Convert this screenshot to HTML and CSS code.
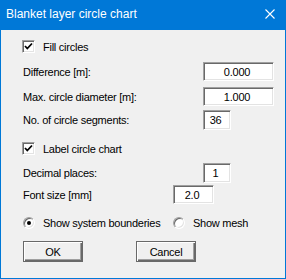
FILE: index.html
```html
<!DOCTYPE html>
<html lang="en">
<head>
  <meta charset="UTF-8" />
  <title>Blanket layer circle chart</title>
  <link rel="stylesheet" href="styles.css">
</head>
<body>
  <div class="dialog">
    <div class="titlebar">
      <span class="title">Blanket layer circle chart</span>
      <svg class="close" width="10" height="10" viewBox="0 0 10 10">
        <path d="M0.5 0.5 L9.5 9.5 M9.5 0.5 L0.5 9.5" stroke="#fff" stroke-width="1.1" fill="none" />
      </svg>
    </div>

    <div class="content">
      <label class="check row-fill">
        <span class="box">
          <svg width="9" height="9" viewBox="0 0 9 9"><polyline points="1,4 3.3,6.5 8,1.5" stroke="#000" stroke-width="1.8" fill="none" /></svg>
        </span>
        <span>Fill circles</span>
      </label>

      <div class="field row-diff">
        <span class="label">Difference [m]:</span>
        <input class="input wide" type="text" value="0.000">
      </div>

      <div class="field row-max">
        <span class="label">Max. circle diameter [m]:</span>
        <input class="input wide" type="text" value="1.000">
      </div>

      <div class="field row-seg">
        <span class="label">No. of circle segments:</span>
        <input class="input small" type="text" value="36">
      </div>

      <label class="check row-label">
        <span class="box">
          <svg width="9" height="9" viewBox="0 0 9 9"><polyline points="1,4 3.3,6.5 8,1.5" stroke="#000" stroke-width="1.8" fill="none" /></svg>
        </span>
        <span>Label circle chart</span>
      </label>

      <div class="field row-dec">
        <span class="label">Decimal places:</span>
        <input class="input small" type="text" value="1">
      </div>

      <div class="field row-font">
        <span class="label short">Font size [mm]</span>
        <input class="input medium" type="text" value="2.0">
      </div>

      <div class="radios">
        <label class="radio first">
          <span class="dot checked"></span>
          <span>Show system bounderies</span>
        </label>
        <label class="radio">
          <span class="dot"></span>
          <span>Show mesh</span>
        </label>
      </div>

      <div class="buttons">
        <button class="btn">OK</button>
        <button class="btn">Cancel</button>
      </div>
    </div>
  </div>
</body>
</html>
```

FILE: styles.css
```css
body {
  margin: 0;
  padding: 0;
  background: #fff;
  font-family: "Liberation Sans", Arial, sans-serif;
}

.dialog {
  width: 286px;
  height: 279px;
  box-sizing: border-box;
  background: #f0f0f0;
  border: 1px solid #0078d7;
  border-top: none;
}

.titlebar {
  height: 30px;
  margin: 0 -1px;
  background: #0078d7;
  color: #fff;
  display: flex;
  align-items: center;
  justify-content: space-between;
  padding: 0 11px 0 6px;
}

.title {
  font-size: 12px;
  margin-top: -2px;
}

.close {
  display: block;
  margin-top: -2px;
}

.content {
  font-size: 11px;
  letter-spacing: -0.25px;
  color: #000;
  padding-left: 21px;
}

.check {
  display: flex;
  align-items: center;
  height: 13px;
}

.box {
  width: 13px;
  height: 13px;
  box-sizing: border-box;
  background: #fff;
  border-top: 1px solid #a0a0a0;
  border-left: 1px solid #a0a0a0;
  border-bottom: 1px solid #fff;
  border-right: 1px solid #fff;
  box-shadow: inset 1px 1px #696969, inset -1px -1px #e3e3e3;
  display: flex;
  align-items: center;
  justify-content: center;
  margin-right: 8px;
}

.box svg {
  display: block;
}

.field {
  display: flex;
  align-items: center;
  padding-left: 1px;
}

.label {
  width: 180px;
}

.label.short {
  width: 150px;
}

.input {
  box-sizing: border-box;
  height: 20px;
  font-family: "Liberation Sans", Arial, sans-serif;
  font-size: 11px;
  letter-spacing: -0.25px;
  text-align: center;
  padding: 0 3px 0 0;
  margin: 0;
  background: #fff;
  color: #000;
  border-top: 1px solid #a0a0a0;
  border-left: 1px solid #a0a0a0;
  border-bottom: 1px solid #fff;
  border-right: 1px solid #fff;
  box-shadow: inset 1px 1px #696969, inset -1px -1px #e3e3e3;
  outline: none;
}

.input.wide {
  width: 71px;
  height: 19px;
}

.input.small {
  width: 28px;
}

.input.medium {
  width: 41px;
  height: 19px;
}

.row-fill { margin-top: 10px; }
.row-diff { margin-top: 9px; }
.row-max { margin-top: 6px; }
.row-seg { margin-top: 4px; }
.row-label { margin-top: 12px; }
.row-dec { margin-top: 8px; }
.row-font { margin-top: 2px; }

.radios {
  display: flex;
  margin-top: 13px;
  padding-left: 1px;
  height: 12px;
  align-items: center;
}

.radio {
  display: flex;
  align-items: center;
}

.radio.first {
  width: 150px;
}

.dot {
  width: 12px;
  height: 12px;
  box-sizing: border-box;
  border-radius: 50%;
  background: #fff;
  border: 1px solid;
  border-color: #a0a0a0 #fff #fff #a0a0a0;
  box-shadow: inset 1px 1px #696969, inset -1px -1px #e3e3e3;
  margin-right: 8px;
  position: relative;
}

.dot.checked::after {
  content: "";
  position: absolute;
  left: 3px;
  top: 3px;
  width: 4px;
  height: 4px;
  border-radius: 50%;
  background: #000;
}

.buttons {
  display: flex;
  gap: 53px;
  margin-top: 12px;
  padding-left: 1px;
}

.btn {
  width: 60px;
  height: 21px;
  box-sizing: border-box;
  font-family: "Liberation Sans", Arial, sans-serif;
  font-size: 11px;
  letter-spacing: -0.25px;
  color: #000;
  background: #f0f0f0;
  border: 1px solid #696969;
  box-shadow: inset 1px 1px #fff, inset -1px -1px #696969, inset -2px -2px #a0a0a0;
  padding: 0;
  margin: 0;
}
```
